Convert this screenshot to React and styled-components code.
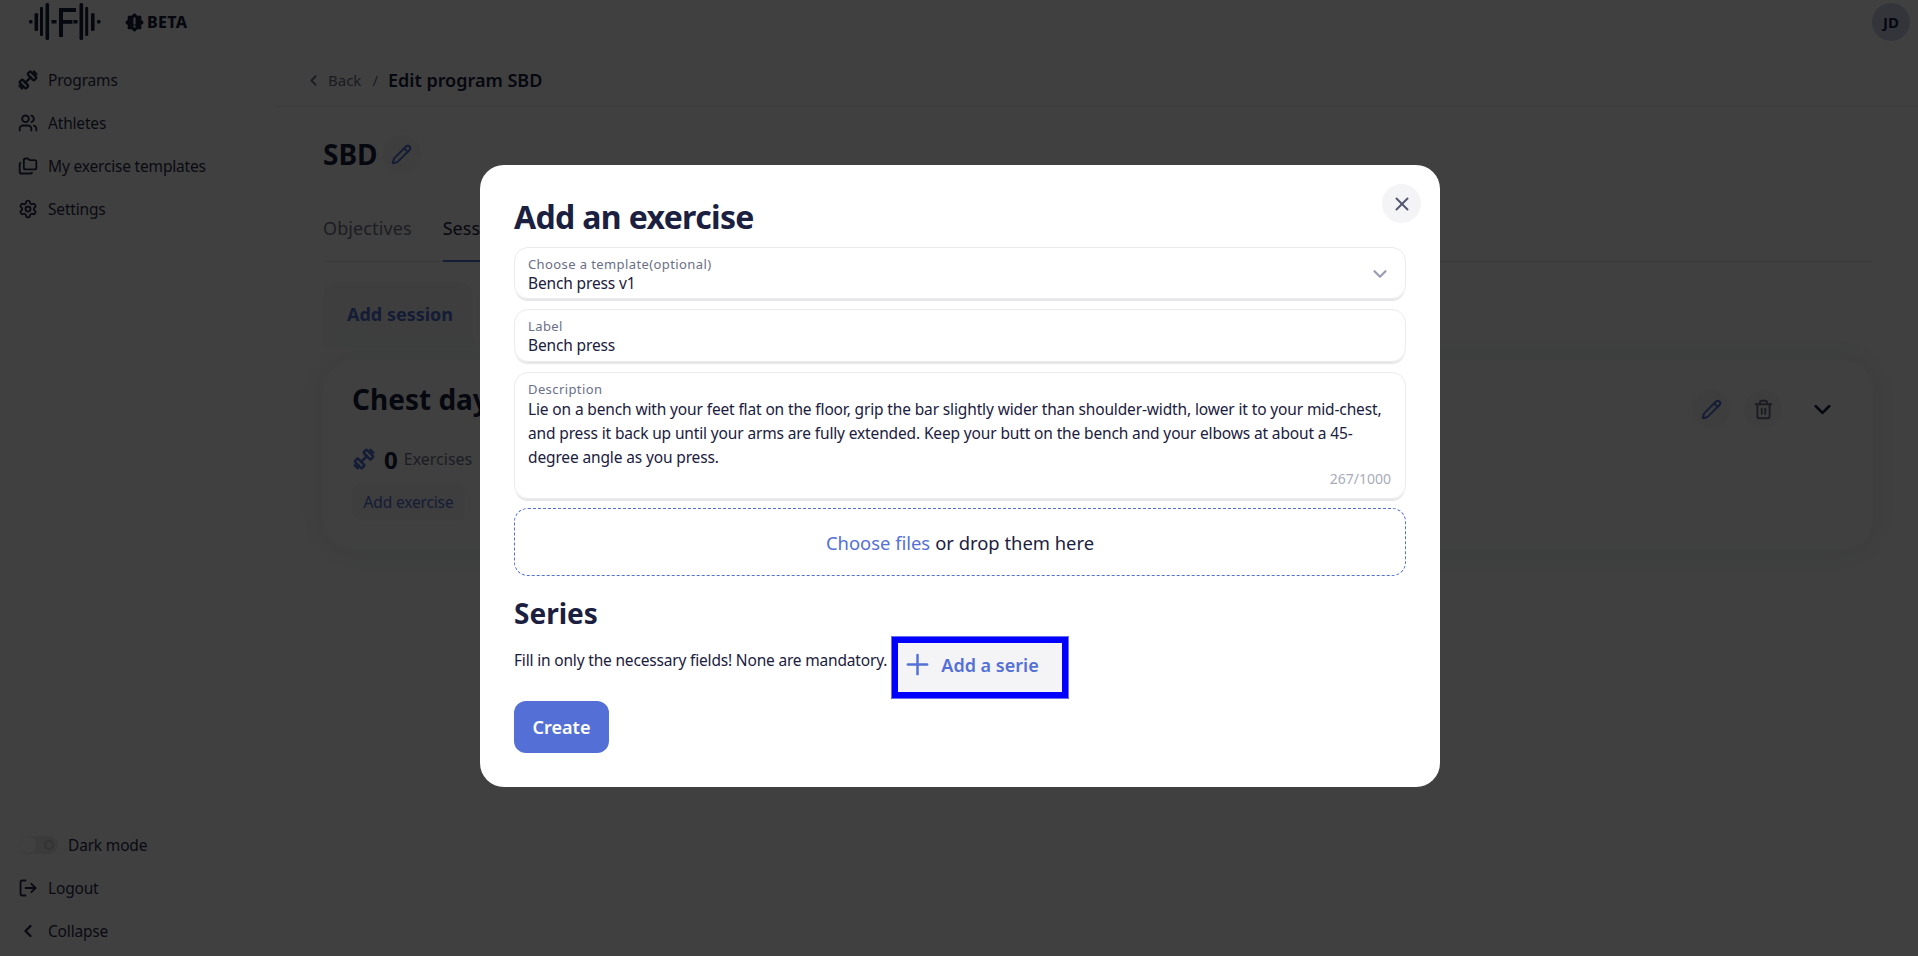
import React from "react";
import styled, { createGlobalStyle } from "styled-components";
import { Users, Folders, Settings, LogOut, ChevronLeft, ChevronDown, Plus, X, Pencil, Trash2 } from "lucide-react";

const FONT = `"Noto Sans", "Open Sans", sans-serif`;
const INK = "#1b2040";
const PRIMARY = "#5470d6";

const GlobalStyle = createGlobalStyle`
  html, body { margin: 0; padding: 0; background: #fff; }
  body { font-family: ${FONT}; color: ${INK}; overflow: hidden; }
  * { box-sizing: border-box; }
`;

const Page = styled.div`
  display: grid;
  grid-template-columns: 275px 1fr;
  height: 956px;
  width: 1918px;
`;

const Sidebar = styled.aside`
  display: flex;
  flex-direction: column;
  height: 956px;
  padding-bottom: 4px;
`;

const LogoRow = styled.div`
  display: flex;
  align-items: center;
  height: 44px;
  padding-left: 24px;
  gap: 17px;
  margin-bottom: 14px;
`;

const Beta = styled.div`
  display: flex;
  align-items: center;
  gap: 3px;
  font-size: 16px;
  font-weight: 800;
  letter-spacing: 0.3px;
`;

const NavList = styled.nav`
  display: flex;
  flex-direction: column;
  flex: 1;
`;

const NavItem = styled.div`
  display: flex;
  align-items: center;
  height: 43px;
  padding-left: 19px;
  gap: 11px;
  font-size: 15.5px;
  letter-spacing: -0.18px;
  color: #2a2e48;
  svg { flex: none; }
`;

const IconSlot = styled.span`
  display: flex;
  justify-content: center;
  width: 18px;
`;

const Toggle = styled.span`
  display: flex;
  align-items: center;
  justify-content: space-between;
  flex: none;
  width: 39px;
  height: 18px;
  padding: 1px 4px 1px 1px;
  border-radius: 9px;
  background: #e9e9ec;
`;

const Knob = styled.span`
  width: 16px;
  height: 16px;
  border-radius: 50%;
  background: #fff;
`;

const ToggleSun = styled.span`
  width: 10px;
  height: 10px;
  border-radius: 50%;
  border: 2px solid #c9c9cf;
`;

const DarkMode = styled(NavItem)`
  gap: 10px;
`;

const Main = styled.main`
  display: flex;
  flex-direction: column;
  min-width: 0;
`;

const TopBar = styled.div`
  display: flex;
  justify-content: flex-end;
  height: 50px;
  padding: 3px 8px 0 0;
`;

const Avatar = styled.div`
  display: flex;
  align-items: center;
  justify-content: center;
  width: 38px;
  height: 38px;
  border-radius: 50%;
  background: #cdd3ec;
  font-size: 15px;
  font-weight: 700;
  color: ${INK};
`;

const Crumbs = styled.div`
  display: flex;
  align-items: center;
  height: 57px;
  padding: 4px 0 0 30px;
  border-top-left-radius: 24px;
  border-bottom: 1px solid #e9e9ec;
  font-size: 15px;
  color: #6d7084;
`;

const CrumbSep = styled.span`
  margin: 0 10px 0 11px;
`;

const CrumbTitle = styled.span`
  font-size: 18px;
  font-weight: 600;
  color: ${INK};
`;

const Content = styled.div`
  display: flex;
  flex-direction: column;
  padding: 26px 45px 0 48px;
`;

const TitleRow = styled.div`
  display: flex;
  align-items: center;
  gap: 5px;
  height: 42px;
  margin-bottom: 39px;
`;

const BigTitle = styled.h1`
  margin: 0;
  font-size: 28px;
  line-height: 34px;
  font-weight: 700;
  color: ${INK};
`;

const RoundIcon = styled.span`
  display: flex;
  align-items: center;
  justify-content: center;
  flex: none;
  width: 38px;
  height: 38px;
  border-radius: 50%;
  background: ${(p) => (p.$plain ? "none" : "#f5f5f7")};
  margin-left: ${(p) => (p.$plain ? "7px" : "0")};
  color: ${(p) => p.$color || PRIMARY};
`;

const Tabs = styled.div`
  display: flex;
  gap: 31px;
  height: 48px;
  border-bottom: 1px solid #e6e6ea;
  font-size: 18px;
  letter-spacing: 0.1px;
`;

const Tab = styled.span`
  height: 48px;
  padding-top: 2px;
  color: ${(p) => (p.$active ? INK : "#72768a")};
  border-bottom: ${(p) => (p.$active ? `2px solid ${PRIMARY}` : "none")};
`;

const AddSessionWrap = styled.div`
  display: flex;
  align-items: center;
  width: 150px;
  height: 66px;
  margin-top: 19px;
  padding-left: 24px;
  background: #f5f7f7;
  border-radius: 16px 16px 0 0;
  font-size: 18px;
  font-weight: 700;
  color: ${PRIMARY};
`;

const Card = styled.section`
  display: flex;
  justify-content: space-between;
  height: 190px;
  margin-top: 13px;
  padding: 21px 29px;
  border-radius: 32px;
  background: #fff;
  box-shadow: 0 0 24px 12px #f2f4f4;
`;

const CardLeft = styled.div`
  display: flex;
  flex-direction: column;
`;

const CardTitle = styled.h2`
  margin: 0 0 28px;
  font-size: 28px;
  line-height: 36px;
  font-weight: 700;
  color: ${INK};
`;

const Count = styled.div`
  display: flex;
  align-items: center;
  gap: 8px;
  height: 28px;
  font-size: 16px;
  color: #72768a;
  b { font-size: 24px; color: ${INK}; margin-right: -2px; }
`;

const SmallButton = styled.span`
  display: flex;
  align-items: center;
  justify-content: center;
  width: 113px;
  height: 38px;
  margin-top: 10px;
  border-radius: 10px;
  background: #f5f5f7;
  font-size: 15.5px;
  letter-spacing: -0.15px;
  color: ${PRIMARY};
`;

const CardActions = styled.div`
  display: flex;
  align-items: center;
  align-self: flex-start;
  margin-top: 9px;
  gap: 14px;
  padding-right: 3px;
`;

const Overlay = styled.div`
  position: fixed;
  inset: 0;
  display: flex;
  align-items: flex-start;
  justify-content: center;
  padding: 165px 0 0 2px;
  background: rgba(0, 0, 0, 0.75);
`;

const Modal = styled.div`
  position: relative;
  display: flex;
  flex-direction: column;
  width: 960px;
  height: 622px;
  padding: 33px 34px 34px;
  border-radius: 24px;
  background: #fff;
`;

const CloseButton = styled.span`
  position: absolute;
  top: 19px;
  right: 19px;
  display: flex;
  align-items: center;
  justify-content: center;
  width: 39px;
  height: 39px;
  border-radius: 50%;
  background: #f4f4f6;
  color: #555970;
`;

const ModalTitle = styled.h2`
  margin: 0 0 11px;
  font-size: 32px;
  line-height: 38px;
  font-weight: 700;
  letter-spacing: -0.65px;
  color: ${INK};
`;

const Field = styled.div`
  display: flex;
  flex-direction: column;
  flex: none;
  position: relative;
  height: ${(p) => p.$height}px;
  margin-bottom: 10px;
  padding: 7px 14px 0 13px;
  border: 1px solid #ebebee;
  border-radius: 14px;
  box-shadow: 0 3px 1px -1px #e6e6e8;
`;

const FieldLabel = styled.span`
  font-size: 13px;
  line-height: 18px;
  letter-spacing: 0.4px;
  color: #6b6f87;
`;

const FieldValue = styled.span`
  font-size: 15.5px;
  line-height: 21px;
  letter-spacing: -0.14px;
  color: ${INK};
`;

const SelectArrow = styled.span`
  position: absolute;
  right: 14px;
  top: 15px;
  display: flex;
  color: #9b9eb0;
`;

const DescriptionLine = styled.div`
  font-size: 15.5px;
  line-height: 24px;
  letter-spacing: -0.14px;
  white-space: nowrap;
  color: ${INK};
  &:first-of-type { margin-top: -1px; }
`;

const Counter = styled.span`
  align-self: flex-end;
  margin-top: 1px;
  font-size: 14px;
  line-height: 18px;
  color: #a9abbb;
`;

const DropZone = styled.div`
  display: flex;
  align-items: center;
  justify-content: center;
  flex: none;
  height: 68px;
  margin-top: -1px;
  border: 1px dashed ${PRIMARY};
  border-radius: 14px;
  font-size: 18.4px;
  color: ${INK};
  span { color: ${PRIMARY}; margin-right: 5px; }
`;

const SeriesTitle = styled.h3`
  margin: 20px 0 13px;
  font-size: 28px;
  line-height: 34px;
  font-weight: 700;
  color: ${INK};
`;

const SeriesRow = styled.div`
  display: flex;
  align-items: flex-start;
  gap: 11px;
`;

const SeriesHint = styled.span`
  padding-top: 5px;
  font-size: 15.5px;
  line-height: 24px;
  letter-spacing: -0.18px;
  color: ${INK};
`;

const AddSerieButton = styled.span`
  display: flex;
  align-items: center;
  gap: 7px;
  width: 164px;
  height: 49px;
  padding: 0 0 6px 3px;
  background: #f4f4f6;
  outline: 6px solid #0000ff;
  box-shadow: 0 0 0 7px #6a6ff0;
  font-size: 18px;
  font-weight: 600;
  color: ${PRIMARY};
  svg { flex: none; }
`;

const CreateButton = styled.span`
  display: flex;
  align-items: center;
  justify-content: center;
  width: 95px;
  height: 53px;
  margin-top: 9px;
  border-radius: 12px;
  background: ${PRIMARY};
  font-size: 18px;
  font-weight: 600;
  color: #fff;
`;

const Logo = () => (
  <svg width="84" height="44" viewBox="0 0 84 44" fill={INK}>
    <rect x="5" y="20" width="3.5" height="3.5" rx="1" />
    <rect x="10.5" y="13" width="3.6" height="18" rx="1.5" />
    <rect x="16" y="7" width="3" height="29" rx="1" />
    <rect x="21.5" y="3" width="3.6" height="37" rx="1.5" />
    <rect x="27.5" y="20" width="5" height="3.5" />
    <rect x="35" y="8" width="4" height="29" />
    <rect x="35" y="8" width="17" height="4" />
    <rect x="35" y="20" width="13.5" height="3.8" />
    <rect x="49.5" y="20" width="4" height="3.5" />
    <rect x="55.5" y="3" width="3.6" height="37" rx="1.5" />
    <rect x="61.2" y="7" width="3" height="29" rx="1" />
    <rect x="67" y="13" width="3.6" height="18" rx="1.5" />
    <rect x="73" y="20" width="3.5" height="3.5" rx="1" />
  </svg>
);

const BetaBadge = () => (
  <svg width="19" height="19" viewBox="0 0 19 19" fill={INK}>
    <circle cx="9.5" cy="9.5" r="7.5" />
    <circle cx="9.5" cy="2.5" r="2" />
    <circle cx="9.5" cy="16.5" r="2" />
    <circle cx="2.5" cy="9.5" r="2" />
    <circle cx="16.5" cy="9.5" r="2" />
    <circle cx="4.5" cy="4.5" r="2" />
    <circle cx="14.5" cy="4.5" r="2" />
    <circle cx="4.5" cy="14.5" r="2" />
    <circle cx="14.5" cy="14.5" r="2" />
    <rect x="8.5" y="4.5" width="2" height="7" fill="#fff" />
    <rect x="8.5" y="12.5" width="2" height="2" fill="#fff" />
  </svg>
);

// chunky diagonal barbell, lucide's one is too thin for this
const Barbell = ({ size = 20, color = "currentColor" }) => (
  <svg width={size} height={size} viewBox="0 0 24 24" fill="none" stroke={color} strokeWidth="2.6" strokeLinejoin="round" strokeLinecap="round">
    <g transform="rotate(-45 12 12)">
      <rect x="3.5" y="7" width="4.5" height="10" rx="1.2" />
      <rect x="16" y="7" width="4.5" height="10" rx="1.2" />
      <path d="M8 12h8M1 10v4M23 10v4" />
    </g>
  </svg>
);

const navItems = [
  { label: "Programs", Icon: Barbell, size: 22, strokeWidth: 2.2 },
  { label: "Athletes", Icon: Users, size: 20, strokeWidth: 2.2 },
  { label: "My exercise templates", Icon: Folders, size: 20, strokeWidth: 2.2 },
  { label: "Settings", Icon: Settings, size: 20, strokeWidth: 2.2 }
];

const App = () => {
  return (
    <>
      <GlobalStyle />
      <Page>
        <Sidebar>
          <LogoRow>
            <Logo />
            <Beta>
              <BetaBadge />
              BETA
            </Beta>
          </LogoRow>
          <NavList>
            {navItems.map(({ label, Icon, size, strokeWidth }) => (
              <NavItem key={label}>
                <IconSlot>
                  <Icon size={size} strokeWidth={strokeWidth} />
                </IconSlot>
                {label}
              </NavItem>
            ))}
          </NavList>
          <DarkMode>
            <Toggle>
              <Knob />
              <ToggleSun />
            </Toggle>
            Dark mode
          </DarkMode>
          <NavItem>
            <IconSlot>
              <LogOut size={20} strokeWidth={2.2} />
            </IconSlot>
            Logout
          </NavItem>
          <NavItem>
            <IconSlot>
              <ChevronLeft size={20} strokeWidth={2.8} />
            </IconSlot>
            Collapse
          </NavItem>
        </Sidebar>
        <Main>
          <TopBar>
            <Avatar>JD</Avatar>
          </TopBar>
          <Crumbs>
            <ChevronLeft size={17} strokeWidth={2.6} style={{ marginRight: 6 }} />
            Back
            <CrumbSep>/</CrumbSep>
            <CrumbTitle>Edit program SBD</CrumbTitle>
          </Crumbs>
          <Content>
            <TitleRow>
              <BigTitle>SBD</BigTitle>
              <RoundIcon>
                <Pencil size={21} strokeWidth={2.2} />
              </RoundIcon>
            </TitleRow>
            <Tabs>
              <Tab>Objectives</Tab>
              <Tab $active>Sessions</Tab>
            </Tabs>
            <AddSessionWrap>Add session</AddSessionWrap>
            <Card>
              <CardLeft>
                <CardTitle>Chest day</CardTitle>
                <Count>
                  <Barbell size={24} color={PRIMARY} />
                  <b>0</b> Exercises
                </Count>
                <SmallButton>Add exercise</SmallButton>
              </CardLeft>
              <CardActions>
                <RoundIcon>
                  <Pencil size={21} strokeWidth={2.2} />
                </RoundIcon>
                <RoundIcon $color="#72768a">
                  <Trash2 size={21} strokeWidth={2.2} />
                </RoundIcon>
                <RoundIcon $color={INK} $plain>
                  <ChevronDown size={27} strokeWidth={2.5} />
                </RoundIcon>
              </CardActions>
            </Card>
          </Content>
        </Main>
      </Page>
      <Overlay>
        <Modal>
          <CloseButton>
            <X size={22} strokeWidth={2.2} />
          </CloseButton>
          <ModalTitle>Add an exercise</ModalTitle>
          <Field $height={52}>
            <FieldLabel>Choose a template(optional)</FieldLabel>
            <FieldValue>Bench press v1</FieldValue>
            <SelectArrow>
              <ChevronDown size={22} strokeWidth={2.4} />
            </SelectArrow>
          </Field>
          <Field $height={53}>
            <FieldLabel>Label</FieldLabel>
            <FieldValue>Bench press</FieldValue>
          </Field>
          <Field $height={127}>
            <FieldLabel>Description</FieldLabel>
            <DescriptionLine>
              Lie on a bench with your feet flat on the floor, grip the bar slightly wider than shoulder-width, lower it to your mid-chest,
            </DescriptionLine>
            <DescriptionLine>
              and press it back up until your arms are fully extended. Keep your butt on the bench and your elbows at about a 45-
            </DescriptionLine>
            <DescriptionLine>degree angle as you press.</DescriptionLine>
            <Counter>267/1000</Counter>
          </Field>
          <DropZone>
            <span>Choose files</span> or drop them here
          </DropZone>
          <SeriesTitle>Series</SeriesTitle>
          <SeriesRow>
            <SeriesHint>Fill in only the necessary fields! None are mandatory.</SeriesHint>
            <AddSerieButton>
              <Plus size={33} strokeWidth={1.8} />
              Add a serie
            </AddSerieButton>
          </SeriesRow>
          <CreateButton>Create</CreateButton>
        </Modal>
      </Overlay>
    </>
  );
};

export default App;
